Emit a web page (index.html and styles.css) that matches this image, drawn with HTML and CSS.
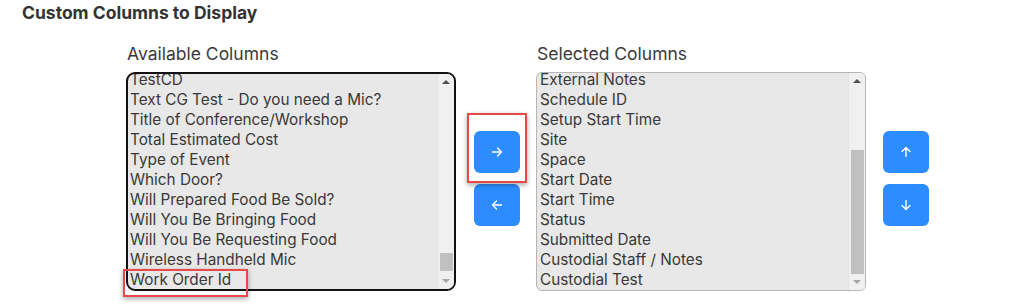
FILE: index.html
```html
<!DOCTYPE html>
<html lang="en">
<head>
  <meta charset="UTF-8" />
  <title>Custom Columns</title>
  <link rel="stylesheet" href="styles.css">
</head>
<body>
  <h2 class="title">Custom Columns to Display</h2>
  <div class="picker">
    <div class="col">
      <div class="label">Available Columns</div>
      <div class="listbox focused">
        <div class="items">
          <div class="item">TestCD</div>
          <div class="item">Text CG Test - Do you need a Mic?</div>
          <div class="item">Title of Conference/Workshop</div>
          <div class="item">Total Estimated Cost</div>
          <div class="item">Type of Event</div>
          <div class="item">Which Door?</div>
          <div class="item">Will Prepared Food Be Sold?</div>
          <div class="item">Will You Be Bringing Food</div>
          <div class="item">Will You Be Requesting Food</div>
          <div class="item">Wireless Handheld Mic</div>
          <div class="item">Work Order Id</div>
        </div>
        <div class="scrollbar">
          <span class="arrow up"></span>
          <div class="track"><div class="thumb thumb-left"></div></div>
          <span class="arrow down off"></span>
        </div>
      </div>
      <div class="highlight hl-item"></div>
    </div>

    <div class="buttons move">
      <button class="btn"><svg width="12" height="12" viewBox="0 0 12 12"><path d="M1.5 6h9M6.5 2l4 4-4 4" fill="none" stroke="#fff" stroke-width="1.4" stroke-linecap="round" stroke-linejoin="round"/></svg></button>
      <button class="btn"><svg width="12" height="12" viewBox="0 0 12 12"><path d="M10.5 6h-9M5.5 2l-4 4 4 4" fill="none" stroke="#fff" stroke-width="1.4" stroke-linecap="round" stroke-linejoin="round"/></svg></button>
      <div class="highlight hl-btn"></div>
    </div>

    <div class="col">
      <div class="label">Selected Columns</div>
      <div class="listbox">
        <div class="items">
          <div class="item">External Notes</div>
          <div class="item">Schedule ID</div>
          <div class="item">Setup Start Time</div>
          <div class="item">Site</div>
          <div class="item">Space</div>
          <div class="item">Start Date</div>
          <div class="item">Start Time</div>
          <div class="item">Status</div>
          <div class="item">Submitted Date</div>
          <div class="item">Custodial Staff / Notes</div>
          <div class="item">Custodial Test</div>
        </div>
        <div class="scrollbar">
          <span class="arrow up"></span>
          <div class="track"><div class="thumb thumb-right"></div></div>
          <span class="arrow down off"></span>
        </div>
      </div>
    </div>

    <div class="buttons order">
      <button class="btn"><svg width="12" height="12" viewBox="0 0 12 12"><path d="M6 10.5v-9M2 5.5l4-4 4 4" fill="none" stroke="#fff" stroke-width="1.4" stroke-linecap="round" stroke-linejoin="round"/></svg></button>
      <button class="btn"><svg width="12" height="12" viewBox="0 0 12 12"><path d="M6 1.5v9M2 6.5l4 4 4-4" fill="none" stroke="#fff" stroke-width="1.4" stroke-linecap="round" stroke-linejoin="round"/></svg></button>
    </div>
  </div>
</body>
</html>
```

FILE: styles.css
```css
html, body {
  margin: 0;
  background: #fff;
}
body {
  min-height: 304px;
  font-family: "Inter", "Noto Sans", sans-serif;
  color: #333;
}
.title {
  margin: 0;
  padding: 3px 0 0 22px;
  font-size: 17.5px;
  line-height: 20px;
  font-weight: 700;
}
.picker {
  display: flex;
  padding: 21px 0 13px 126px;
}
.col {
  position: relative;
  width: 330px;
  display: flex;
  flex-direction: column;
}
.label {
  padding-left: 1px;
  font-size: 17.5px;
  line-height: 20px;
  color: #3a3a3a;
  margin-bottom: 8px;
}
.listbox {
  position: relative;
  height: 219px;
  box-sizing: border-box;
  border: 1px solid #b5b5b5;
  border-radius: 6px;
  background: #e8e8e8;
  display: flex;
  overflow: hidden;
}
.listbox.focused {
  border: 2px solid #111;
  border-radius: 9px;
}
.items {
  flex: 1;
  margin-top: -3px;
  padding-left: 3px;
}
.focused .items {
  margin-top: -4px;
  padding-left: 2px;
}
.item {
  height: 20px;
  line-height: 20px;
  font-size: 15.3px;
  white-space: nowrap;
  color: #383838;
}
.scrollbar {
  width: 16px;
  background: #f0f0f0;
  border-left: 1px solid #e2e2e2;
  display: flex;
  flex-direction: column;
  align-items: center;
}
.arrow {
  width: 0;
  height: 0;
  border-left: 4px solid transparent;
  border-right: 4px solid transparent;
  margin: 6px 0;
}
.arrow.up {
  border-bottom: 4px solid #505050;
}
.arrow.down {
  border-top: 4px solid #505050;
}
.arrow.off {
  border-top-color: #a8a8a8;
}
.track {
  flex: 1;
  width: 100%;
  position: relative;
}
.thumb {
  position: absolute;
  left: 2px;
  right: 1px;
  background: #c0c0c0;
}
.thumb-left {
  bottom: 2px;
  height: 18px;
}
.thumb-right {
  bottom: 0;
  height: 124px;
}
.buttons {
  position: relative;
  width: 46px;
  display: flex;
  flex-direction: column;
  gap: 11px;
  padding-top: 87px;
}
.buttons.move {
  margin: 0 16px 0 18px;
}
.buttons.order {
  margin-left: 17px;
}
.btn {
  width: 46px;
  height: 42px;
  border: none;
  border-radius: 6px;
  background: #2d8cff;
  display: flex;
  align-items: center;
  justify-content: center;
  padding: 0;
}
.highlight {
  position: absolute;
  z-index: 2;
  box-sizing: border-box;
  border: 2px solid #e8474b;
  box-shadow: 0 2px 5px rgba(0, 0, 0, 0.35);
}
.hl-btn {
  left: -7px;
  top: 69px;
  width: 60px;
  height: 70px;
}
.hl-item {
  left: -3px;
  top: 225px;
  width: 125px;
  height: 28px;
}
```
